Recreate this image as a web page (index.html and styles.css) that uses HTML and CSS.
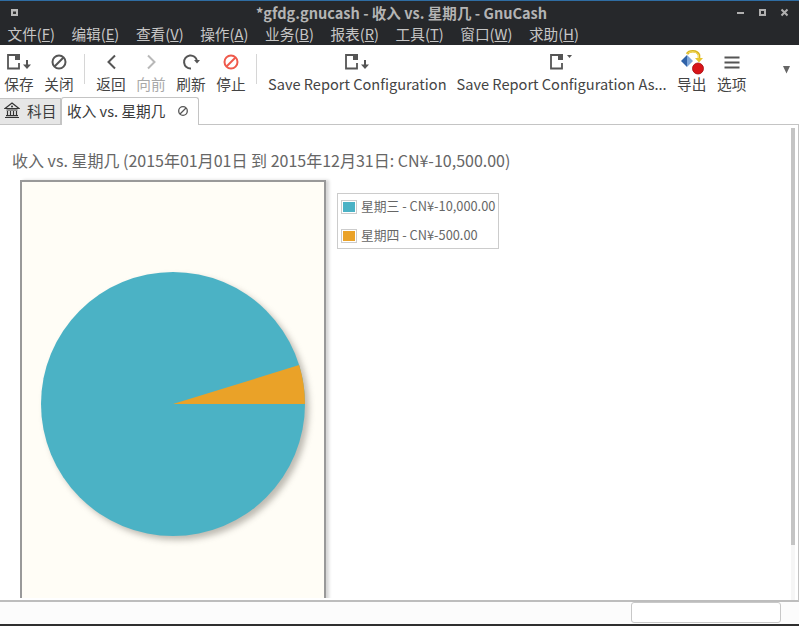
FILE: index.html
```html
<!DOCTYPE html>
<html lang="zh">
<head>
<meta charset="utf-8">
<title>GnuCash</title>
<link rel="stylesheet" href="styles.css">
</head>
<body>
<div class="window">
  <header class="chrome">
    <div class="titlebar">
      <svg class="win-menu" width="9" height="9" viewBox="0 0 9 9"><rect x="1" y="1" width="7" height="7" fill="#b9b9b9"/><rect x="3" y="3.500" width="3" height="2.500" fill="#333"/></svg>
      <span class="title">*gfdg.gnucash - 收入 vs. 星期几 - GnuCash</span>
      <div class="win-btns">
        <svg width="9" height="9" viewBox="0 0 9 9"><rect x="1" y="4" width="7" height="2" fill="#b0b0b0"/></svg>
        <svg width="9" height="9" viewBox="0 0 9 9"><path d="M1 1h7v7H1z M3 3v3h3V3z" fill="#b0b0b0" fill-rule="evenodd"/></svg>
        <svg width="9" height="9" viewBox="0 0 9 9"><path d="M1.500 1.500l6 6M7.500 1.500l-6 6" stroke="#b0b0b0" stroke-width="2"/></svg>
      </div>
    </div>
    <nav class="menubar">
      <span class="menu">文件(<u>F</u>)</span>
      <span class="menu">编辑(<u>E</u>)</span>
      <span class="menu">查看(<u>V</u>)</span>
      <span class="menu">操作(<u>A</u>)</span>
      <span class="menu">业务(<u>B</u>)</span>
      <span class="menu">报表(<u>R</u>)</span>
      <span class="menu">工具(<u>T</u>)</span>
      <span class="menu">窗口(<u>W</u>)</span>
      <span class="menu">求助(<u>H</u>)</span>
    </nav>
  </header>

  <div class="toolbar">
    <div class="tool first"><svg class="ico" width="26" height="20" viewBox="0 0 26 20"><path d="M10 3H2V16.500H13V11" fill="none" stroke="#555" stroke-width="1.800"/><rect x="9" y="2" width="5" height="6" fill="#555"/><path d="M21 8v5" stroke="#555" stroke-width="2"/><path d="M17 12.500h8L21 17z" fill="#555"/></svg><span>保存</span></div>
    <div class="tool"><svg class="ico" width="20" height="20" viewBox="0 0 20 20"><circle cx="10" cy="10" r="6.500" fill="none" stroke="#555" stroke-width="2"/><path d="M5.500 14.500l9-9" stroke="#555" stroke-width="2"/></svg><span>关闭</span></div>
    <div class="sep"></div>
    <div class="tool"><svg class="ico" width="20" height="20" viewBox="0 0 20 20"><path d="M14 3.500L7.500 10l6.500 6.500" fill="none" stroke="#555" stroke-width="2"/></svg><span>返回</span></div>
    <div class="tool off"><svg class="ico" width="20" height="20" viewBox="0 0 20 20"><path d="M7 3.500L13.500 10 7 16.500" fill="none" stroke="#b8b8b8" stroke-width="2"/></svg><span>向前</span></div>
    <div class="tool"><svg class="ico" width="20" height="20" viewBox="0 0 20 20"><path d="M10 16.500A6.500 6.500 0 1 1 16 9" fill="none" stroke="#555" stroke-width="2"/><path d="M13 8h6l-3 3.500z" fill="#555"/></svg><span>刷新</span></div>
    <div class="tool"><svg class="ico" width="20" height="20" viewBox="0 0 20 20"><circle cx="10" cy="10" r="6.500" fill="none" stroke="#ef5a4c" stroke-width="2"/><path d="M5.500 14.500l9-9" stroke="#ef5a4c" stroke-width="2"/></svg><span>停止</span></div>
    <div class="sep"></div>
    <div class="tool long"><svg class="ico" width="26" height="20" viewBox="0 0 26 20"><path d="M10 3H2V16.500H13V11" fill="none" stroke="#555" stroke-width="1.800"/><rect x="9" y="2" width="5" height="6" fill="#555"/><path d="M21 8v5" stroke="#555" stroke-width="2"/><path d="M17 12.500h8L21 17z" fill="#555"/></svg><span>Save Report Configuration</span></div>
    <div class="tool long"><svg class="ico" width="26" height="20" viewBox="0 0 26 20"><path d="M10 3H2V16.500H13V11" fill="none" stroke="#555" stroke-width="1.800"/><rect x="9" y="2" width="5" height="6" fill="#555"/><path d="M18 3h5l-2.500 3z" fill="#555"/></svg><span>Save Report Configuration As...</span></div>
    <div class="tool"><svg class="ico ico-big" width="26" height="26" viewBox="0 0 26 26"><path d="M2 11l6-6v12z" fill="#2f62a8"/><path d="M8 5l6 6-6 6z" fill="#7ea6d8"/><path d="M8 4C10 .500 18 0 20 5v5" fill="none" stroke="#d9b420" stroke-width="2.600"/><path d="M8.500 3.500C11 1 17.500 1 19.500 5v4" fill="none" stroke="#f7e16a" stroke-width="1"/><path d="M16 8h8l-4 4.500z" fill="#e8c52e"/><circle cx="19" cy="18.500" r="5.500" fill="#d81418"/><circle cx="19" cy="18.500" r="5.500" fill="none" stroke="#a50d10" stroke-width=".8"/></svg><span>导出</span></div>
    <div class="tool"><svg class="ico" width="20" height="20" viewBox="0 0 20 20"><path d="M2.500 5.500h15M2.500 10.500h15M2.500 15.500h15" stroke="#555" stroke-width="2"/></svg><span>选项</span></div>
    <svg class="more" width="10" height="8" viewBox="0 0 10 8"><path d="M1 0h7L4.500 7.500z" fill="#666"/></svg>
  </div>

  <div class="tabs">
    <div class="tab tab-off">
      <svg width="16" height="17" viewBox="0 0 16 17"><path d="M8 1L15 6.500H1z" fill="none" stroke="#333" stroke-width="1.200"/><circle cx="8" cy="4.600" r="1" fill="#333"/><path d="M2.500 8h11M3.500 9v4M6.500 9v4M9.500 9v4M12.500 9v4M2 13.700h12M1 15.500h14" stroke="#333" stroke-width="1.200" fill="none"/></svg>
      <span>科目</span>
    </div>
    <div class="tab tab-on">
      <span>收入 vs. 星期几</span>
      <svg width="12" height="12" viewBox="0 0 12 12"><circle cx="6" cy="6" r="4.300" fill="none" stroke="#555" stroke-width="1.300"/><path d="M3 9l6-6" stroke="#555" stroke-width="1.300"/></svg>
    </div>
    <div class="tab-rest"></div>
  </div>

  <main class="content">
    <div class="report">
      <h1 class="report-title">收入 vs. 星期几 (2015年01月01日 到 2015年12月31日: CN¥-10,500.00)</h1>
      <div class="plot-row">
        <div class="plot">
          <svg class="pie" width="302" height="416" viewBox="0 0 302 416">
            <defs><filter id="blur" x="-10%" y="-10%" width="120%" height="120%"><feGaussianBlur stdDeviation="3"/></filter></defs>
            <circle cx="155" cy="226" r="132" fill="#7d786e" opacity=".5" filter="url(#blur)"/>
            <circle cx="151" cy="222" r="132" fill="#4bb2c5"/>
            <path d="M151 222H283A132 132 0 0 0 277.140 183.100Z" fill="#eaa228"/>
          </svg>
        </div>
        <div class="legend">
          <div class="legend-row"><span class="swatch"><i class="teal"></i></span><span class="legend-text">星期三 - CN¥-10,000.00</span></div>
          <div class="legend-row"><span class="swatch"><i class="orange"></i></span><span class="legend-text">星期四 - CN¥-500.00</span></div>
        </div>
      </div>
    </div>
    <div class="scrollbar"><div class="thumb"></div></div>
  </main>

  <footer class="status">
    <div class="status-box"></div>
  </footer>
</div>
</body>
</html>
```

FILE: styles.css
```css
* { box-sizing: border-box; }
html, body { margin: 0; padding: 0; }
body {
  width: 799px;
  height: 626px;
  overflow: hidden;
  background: #fff;
  font-family: "Noto Sans CJK SC", sans-serif;
  color: #3a3a3a;
}
.window { display: flex; flex-direction: column; height: 626px; border-bottom: 2px solid #2f2f2f; }

.chrome { background: #26282b; border-top: 1px solid #2f6da3; flex: none; height: 45px; }
.titlebar { position: relative; height: 22px; display: flex; align-items: center; justify-content: center; padding: 1px 0 0 4px; }
.win-menu { position: absolute; left: 10px; top: 7px; }
.title { color: #b4b4b4; font-size: 14.560px; font-weight: 700; line-height: 21px; }
.win-btns { position: absolute; right: 10px; top: 7px; display: flex; gap: 13px; }
.menubar { height: 22px; display: flex; padding-left: 7.500px; gap: 16.600px; color: #c6c6c6; font-size: 14.670px; line-height: 21px; }
.menubar .menu { white-space: nowrap; }

.toolbar { flex: none; height: 52px; display: flex; align-items: flex-start; background: #fff; position: relative; }
.tool { flex: none; min-width: 40px; display: flex; flex-direction: column; align-items: center; font-size: 14.670px; line-height: 20px; padding: 7px 5px 0; color: #444; white-space: nowrap; }
.tool.first { min-width: 39px; padding-left: 4px; }
.tool.long { font-size: 14.580px; }
.tool .ico { display: block; height: 20px; margin-bottom: 2px; }
.tool .ico-big { height: 26px; margin-top: -2px; margin-bottom: -2px; }
.off { color: #a8a8a8; }
.sep { flex: none; width: 1px; height: 30px; background: #d6d6d6; margin: 9px 6px 0 5px; }
.more { position: absolute; left: 782px; top: 21px; }

.tabs { flex: none; height: 28px; display: flex; align-items: flex-end; background: #fff; font-size: 14.670px; color: #3a3a3a; }
.tab { display: flex; align-items: center; white-space: nowrap; line-height: 20px; }
.tab-off { height: 27px; width: 61px; gap: 7px; padding: 0 0 2px 4px; background: #e6e6e6; border: 1px solid #c4c4c4; border-left: 0; }
.tab-on { height: 28px; width: 138px; padding: 0 0 2px 5px; gap: 12px; background: #fff; border: 1px solid #c4c4c4; border-bottom: 0; border-radius: 3px 3px 0 0; }
.tab-rest { flex: 1; height: 1px; background: #c4c4c4; }

.content { flex: 1; min-height: 0; overflow: hidden; border-right: 1px solid #c4c4c4; border-bottom: 2px solid #bdbdbd; display: flex; }
.report { flex: 1; min-width: 0; height: 473px; overflow: hidden; }
.report-title { margin: 0; padding: 23px 0 0 12px; height: 55px; font-size: 16px; line-height: 24px; font-weight: 400; color: #666; white-space: nowrap; }
.plot-row { display: flex; align-items: flex-start; padding-left: 20px; }
.plot { flex: none; width: 306px; height: 440px; background: #fffdf6; border: 2px solid #999; box-shadow: 3px 0 3px rgba(0,0,0,.16); }
.pie { display: block; }
.legend { flex: none; margin: 13px 0 0 11px; width: 162px; height: 56px; border: 1px solid #ccc; font-size: 12.800px; color: #666; display: flex; flex-direction: column; gap: 4px; }
.legend-row { display: flex; align-items: center; height: 25px; padding-left: 3px; gap: 4px; white-space: nowrap; }
.legend-text { padding-bottom: 2px; }
.swatch { display: block; flex: none; width: 16px; height: 14px; border: 1px solid #ccc; padding: 1px; }
.swatch i { display: block; width: 100%; height: 100%; }
.teal { background: #4bb2c5; }
.orange { background: #eaa228; }
.scrollbar { flex: none; width: 7px; margin-bottom: 2px; padding-top: 3px; }
.thumb { width: 4px; height: 417px; background: #c4c4c4; box-shadow: 0 58px 0 #f6f6f6; }

.status { flex: none; height: 22px; background: #fcfcfc; position: relative; }
.status-box { position: absolute; left: 631px; top: 0; width: 150px; height: 21px; border: 1px solid #c8c8c8; border-radius: 3px; background: #fff; }
```
